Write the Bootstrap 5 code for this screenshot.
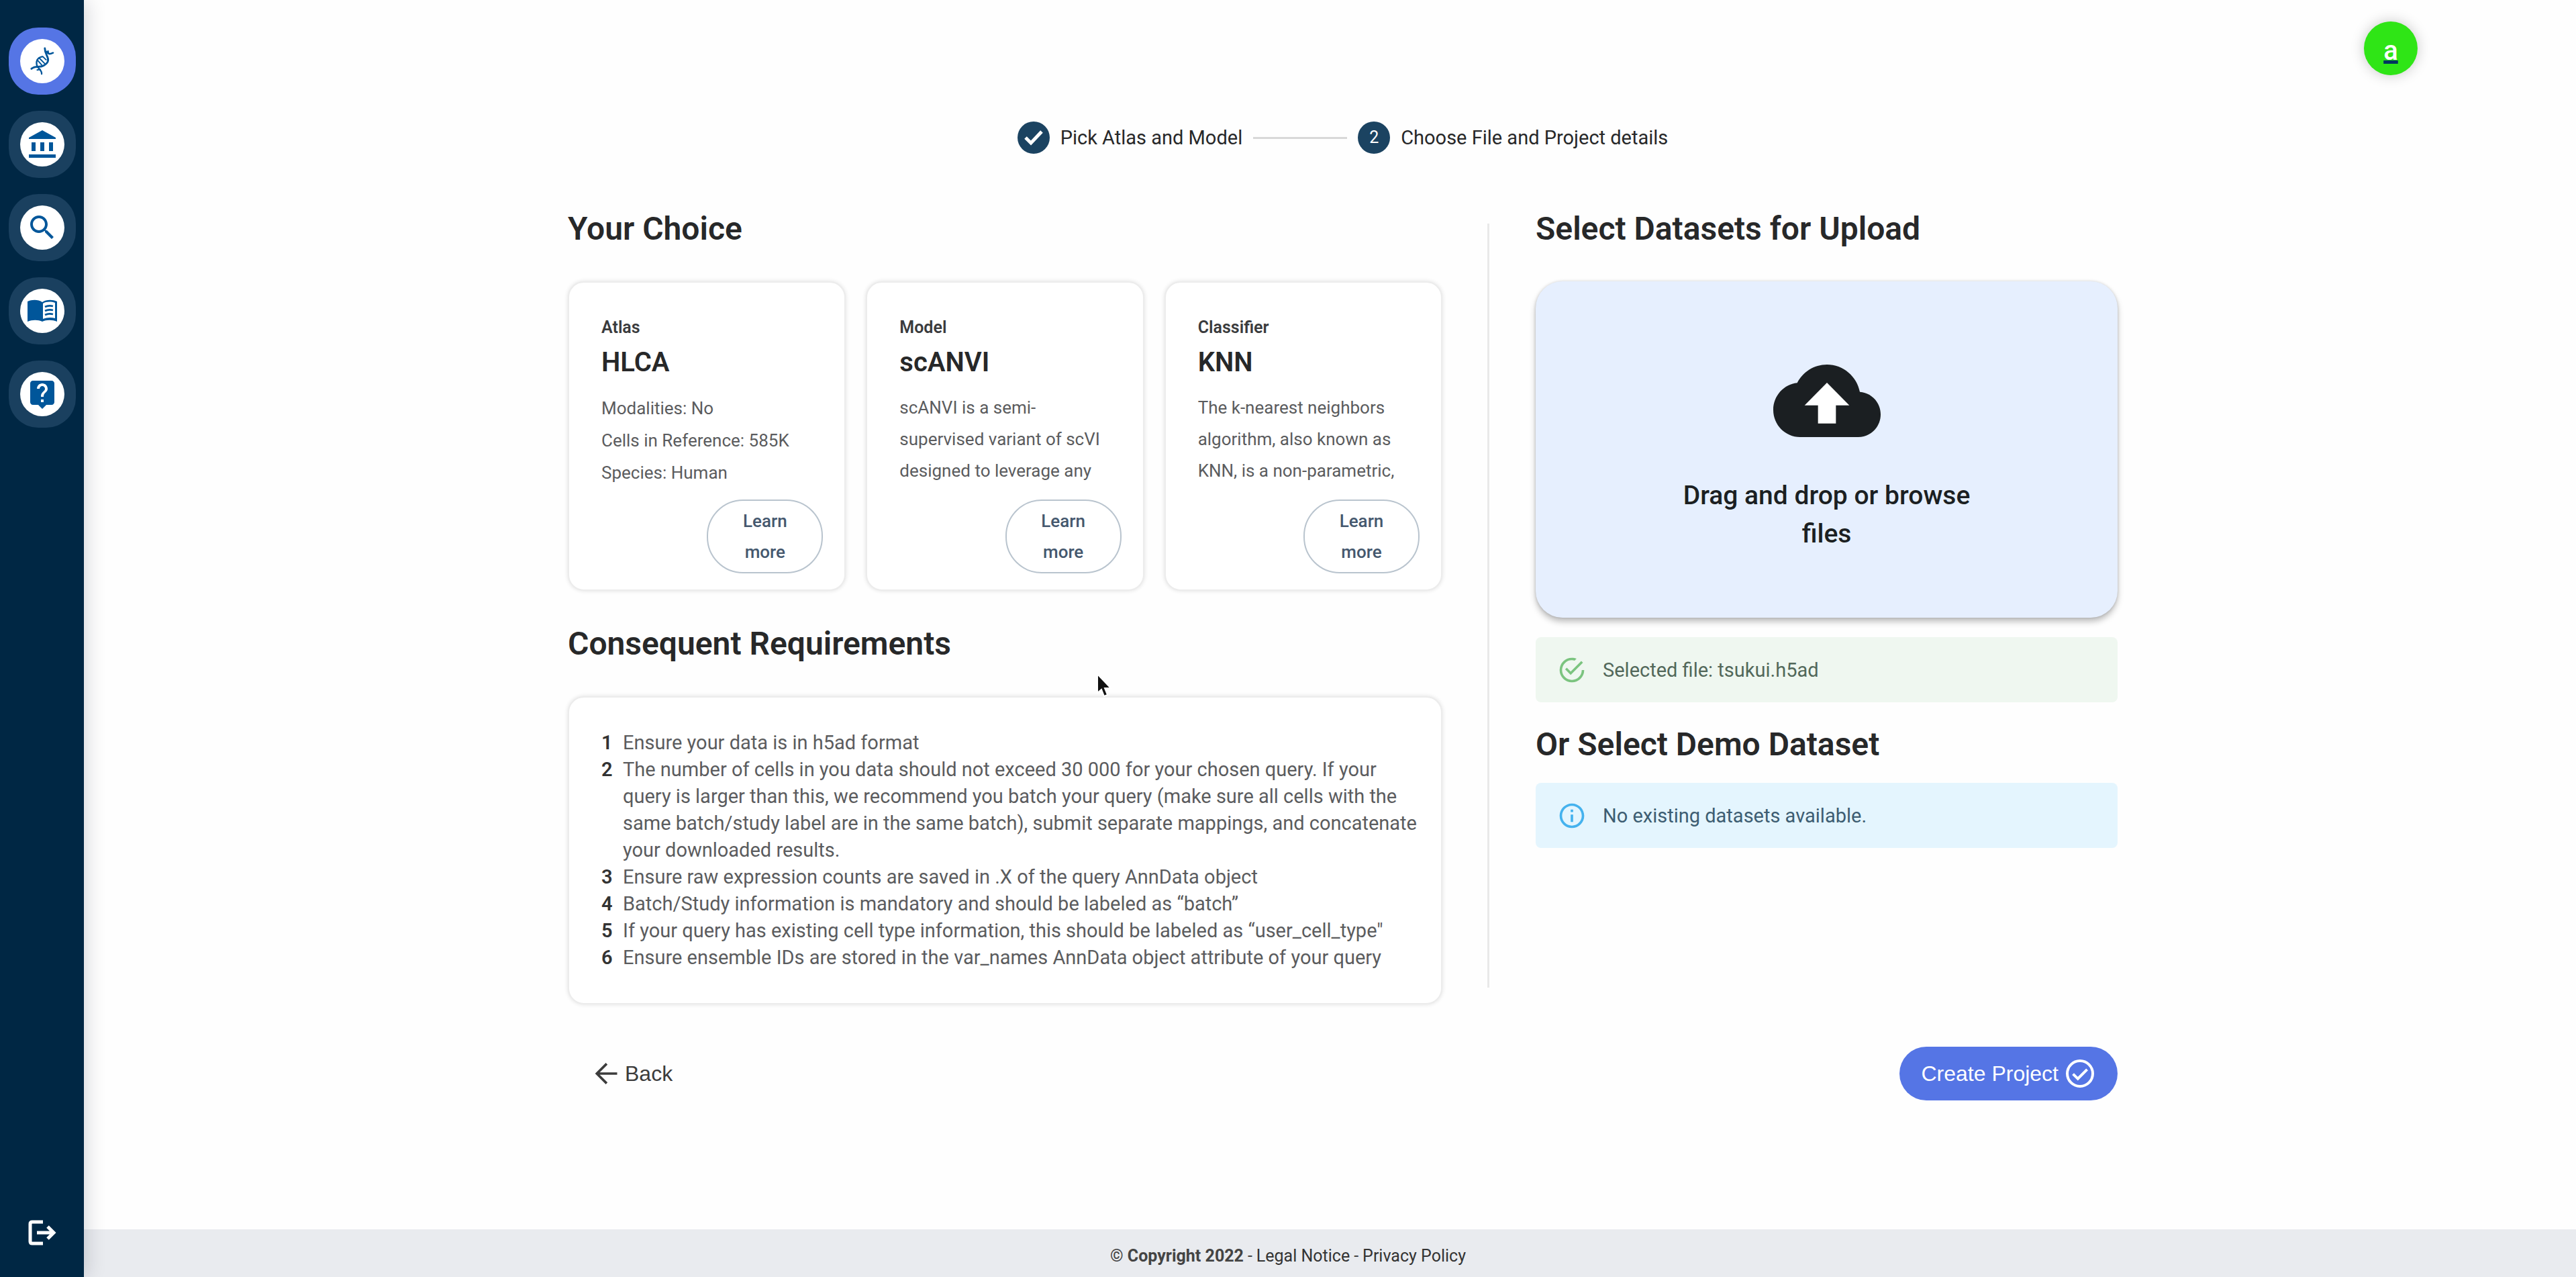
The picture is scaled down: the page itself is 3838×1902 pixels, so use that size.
<!DOCTYPE html>
<html lang="en">
<head>
<meta charset="utf-8">
<meta name="viewport" content="width=device-width, initial-scale=1">
<title>Create Project</title>
<link rel="stylesheet" href="https://cdn.jsdelivr.net/npm/bootstrap@5.3.0/dist/css/bootstrap.min.css">
<style>
  :root { --navy: #002744; --steel: #1b4361; --accent: #5575e5; --ink: #272829; --soft: #5b5c5e; }
  body { font-family: Roboto, "Liberation Sans", sans-serif; color: var(--ink); background: #fefefe; font-size: 26px; line-height: 40px; }
  svg { display: block; flex: none; }

  .side-rail { width: 125px; background: var(--navy); padding: 41px 12px 41px; box-shadow: 4px 0 28px rgba(0, 20, 40, .16); z-index: 10; }
  .rail-list { gap: 24px; }
  .rail-link { width: 100px; height: 100px; border-radius: 44px; background: #1a405f; }
  .rail-link.active { background: var(--accent); }
  .rail-disc { width: 66px; height: 66px; background: #fff; color: #00569a; }
  .rail-exit { width: 50px; height: 50px; color: #fff; }

  .page-body { padding-left: 163px; }
  .top-bar { padding: 32px 236px 0 0; }
  .avatar-link { width: 80px; height: 80px; padding-top: 8px; background: #2fe516; color: #fff; font-size: 40px; line-height: 40px; font-weight: 500; box-shadow: 0 0 20px rgba(0, 0, 0, .22); text-decoration-color: #003560; text-decoration-thickness: 5px; text-underline-offset: 1px; text-decoration-skip-ink: none; }
  .avatar-link:hover { color: #fff; }

  .stepper { gap: 16px; margin-top: 69px; font-size: 29px; line-height: 48px; }
  .step-item { gap: 16px; }
  .step-dot { width: 48px; height: 48px; background: var(--steel); color: #fff; font-size: 25px; }
  .step-line { width: 140px; height: 3px; background: #d8d8d8; }

  .content-wrap { max-width: 2309px; margin-top: 84px; }
  .col-left { flex: 1303 1 0; min-width: 0; }
  .col-right { flex: 867 1 0; min-width: 0; }
  .col-rule { width: 3px; background: #e9e9e9; margin: 20px 69px 25px 67px; }
  .sec-title { font-size: 48px; line-height: 56px; font-weight: 600; margin: 0 0 50px; }

  .panel { background: #fff; border-radius: 24px; border: 2px solid #ececec; box-shadow: 0 0 6px rgba(0, 0, 0, .12); }
  .choice-row { gap: 30px; margin-bottom: 51px; }
  .choice { flex: 1 1 0; min-width: 0; padding: 49px 32px 24px 48px; }
  .choice-kind { font-size: 25px; line-height: 36px; font-weight: 600; margin-bottom: 8px; color: #3a3b3d; }
  .choice-name { font-size: 40px; line-height: 52px; font-weight: 600; margin: 0; }
  .choice-text { font-size: 26px; line-height: 47px; height: 144px; margin: 18px 8px 16px 0; color: var(--soft); }
  .choice-facts { line-height: 48px; }
  .btn-learn { width: 173px; padding: 7px 30px; border: 2px solid #b9c4ce; border-radius: 54px; font-size: 26px; line-height: 46px; font-weight: 500; color: #45586e; background: #fff; }

  .rules-panel { padding: 47px 28px 48px 48px; }
  .rules-list { counter-reset: rule; color: var(--soft); font-size: 29px; }
  .rules-list li { counter-increment: rule; display: flex; }
  .rules-list li::before { content: counter(rule); flex: 0 0 32px; font-weight: 600; color: #333; }

  .drop-zone { height: 501px; padding: 27px 0 0; border: 0; border-radius: 40px; background: #e6effe; color: #1b1f22; box-shadow: 0 6px 10px rgba(0, 0, 0, .25), 0 0 4px rgba(0, 0, 0, .15); font-size: 39px; line-height: 57px; font-weight: 500; margin-bottom: 29px; }
  .drop-label { max-width: 480px; margin-top: 59px; }
  .note { height: 97px; border: 0; border-radius: 8px; padding: 0 32px; gap: 24px; font-size: 29px; }
  .note-ok { background: #eff7f0; color: #52685a; }
  .note-ok svg { color: #7bc47f; }
  .note-info { background: #e4f5fe; color: #3d5d72; }
  .note-info svg { color: #45b2ee; }
  .demo-title { margin: 35px 0 29px; }

  .action-row { margin-top: 61px; font-family: Arial, "Liberation Sans", sans-serif; }
  .btn-back { font-size: 32px; line-height: 40px; gap: 6px; padding: 20px 35px; color: #3c3c3c; border: 0; }
  .btn-create { font-size: 32px; line-height: 40px; gap: 8px; padding: 16px 32px; border-radius: 40px; background: var(--accent); color: #fff; border: 0; }

  .legal { background: #e9ebef; height: 71px; font-size: 25px; color: #444; gap: 6px; padding-top: 8px; }
  .legal a { color: #333; text-decoration: none; }

  .pointer { left: 1632px; top: 1001px; z-index: 20; }
</style>
</head>
<body class="position-relative">
<div class="d-flex flex-column min-vh-100">

  <nav class="side-rail position-fixed top-0 start-0 vh-100 d-flex flex-column align-items-center justify-content-between" aria-label="Main">
    <ul class="rail-list list-unstyled d-flex flex-column m-0">
      <li><a href="#" class="rail-link active d-flex align-items-center justify-content-center" aria-label="Gene mapper">
        <span class="rail-disc rounded-circle d-flex align-items-center justify-content-center">
          <svg width="38" height="44" viewBox="0 0 40 46" fill="none" stroke="currentColor" stroke-linecap="round">
            <path d="M3 35C10 29 15 34 22 30C31 25 30 20 27 14C25 10 24 6 24 3" stroke-width="3"/>
            <path d="M19 43C20 38 14 35 12 31" stroke-width="2.500"/>
            <path d="M12 31C9 23 13 17 20 16" stroke-width="2.500"/>
            <path d="M27 8C29 13 33 12 37 10" stroke-width="2.500"/>
            <path d="M12 21L19 29M15 18L24 27M21 16L26 21M12 37L17 36M29 7L30 11" stroke-width="2"/>
          </svg>
        </span></a></li>
      <li><a href="#" class="rail-link d-flex align-items-center justify-content-center" aria-label="Atlases">
        <span class="rail-disc rounded-circle d-flex align-items-center justify-content-center">
          <svg width="42" height="42" viewBox="0 0 42 42" fill="currentColor">
            <path d="M1 13V11L21 0L41 11V13ZM5 18H11V31H5ZM18 18H24V31H18ZM31 18H37V31H31ZM1 36H41V41H1Z"/>
          </svg>
        </span></a></li>
      <li><a href="#" class="rail-link d-flex align-items-center justify-content-center" aria-label="Search">
        <span class="rail-disc rounded-circle d-flex align-items-center justify-content-center">
          <svg width="48" height="48" viewBox="0 0 24 24" fill="currentColor">
            <path d="M15.5 14h-.79l-.28-.27C15.41 12.59 16 11.11 16 9.500 16 5.910 13.090 3 9.500 3S3 5.910 3 9.500 5.910 16 9.500 16c1.610 0 3.090-.59 4.230-1.570l.27.28v.79l5 4.990L20.490 19zm-6 0C7.010 14 5 11.990 5 9.500S7.010 5 9.500 5 14 7.010 14 9.500 11.990 14 9.500 14"/>
          </svg>
        </span></a></li>
      <li><a href="#" class="rail-link d-flex align-items-center justify-content-center" aria-label="Documentation">
        <span class="rail-disc rounded-circle d-flex align-items-center justify-content-center">
          <svg width="46" height="36" viewBox="0 0 46 36">
            <path fill="currentColor" d="M1 4C8 1 17 1 23 5C29 1 38 1 45 4V34C38 31 29 31 23 34C17 31 8 31 1 34Z"/>
            <path fill="#fff" d="M24 7C29 4 36 4 42 6V29C36 27 29 28 24 30Z"/>
            <path fill="none" stroke="currentColor" stroke-width="2.600" d="M27 12C31 10 35 10 39 11M27 18C31 16 35 16 39 17M27 24C31 22 35 22 39 23"/>
          </svg>
        </span></a></li>
      <li><a href="#" class="rail-link d-flex align-items-center justify-content-center" aria-label="Help">
        <span class="rail-disc rounded-circle d-flex align-items-center justify-content-center">
          <svg width="48" height="48" viewBox="0 0 24 24" fill="currentColor">
            <path d="M19 2H5c-1.110 0-2 .9-2 2v14c0 1.100.89 2 2 2h4l3 3 3-3h4c1.100 0 2-.9 2-2V4c0-1.100-.9-2-2-2m-6 16h-2v-2h2zm2.070-7.750l-.9.92C13.450 11.900 13 12.500 13 14h-2v-.5c0-1.100.45-2.100 1.170-2.830l1.240-1.260c.37-.36.59-.86.59-1.410 0-1.100-.9-2-2-2s-2 .9-2 2H8c0-2.210 1.790-4 4-4s4 1.790 4 4c0 .88-.36 1.680-.93 2.250"/>
          </svg>
        </span></a></li>
    </ul>
    <a href="#" class="rail-exit d-flex align-items-center justify-content-center" aria-label="Log out">
      <svg width="42" height="38" viewBox="0 0 42 38" fill="none" stroke="currentColor" stroke-width="5">
        <path d="M22 3H6Q3 3 3 6V32Q3 35 6 35H22M13 19H38M29 10L38 19L29 28"/>
      </svg>
    </a>
  </nav>

  <div class="page-body flex-grow-1">
    <header class="top-bar d-flex justify-content-end">
      <a href="#" class="avatar-link rounded-circle d-flex align-items-center justify-content-center">a</a>
    </header>

    <div class="stepper d-flex align-items-center justify-content-center">
      <div class="step-item d-flex align-items-center">
        <span class="step-dot rounded-circle d-flex align-items-center justify-content-center">
          <svg width="28" height="24" viewBox="0 0 28 24" fill="none" stroke="currentColor" stroke-width="5"><path d="M2 12L10 20L26 3"/></svg>
        </span>
        <span>Pick Atlas and Model</span>
      </div>
      <span class="step-line"></span>
      <div class="step-item d-flex align-items-center">
        <span class="step-dot rounded-circle d-flex align-items-center justify-content-center">2</span>
        <span>Choose File and Project details</span>
      </div>
    </div>

    <main class="content-wrap mx-auto">
      <div class="d-flex">
        <section class="col-left">
          <h2 class="sec-title">Your Choice</h2>
          <div class="choice-row d-flex">
            <article class="panel choice d-flex flex-column">
              <h3 class="choice-kind">Atlas</h3>
              <p class="choice-name">HLCA</p>
              <ul class="choice-text choice-facts list-unstyled">
                <li>Modalities: No</li>
                <li>Cells in Reference: 585K</li>
                <li>Species: Human</li>
              </ul>
              <button type="button" class="btn btn-learn align-self-end">Learn more</button>
            </article>
            <article class="panel choice d-flex flex-column">
              <h3 class="choice-kind">Model</h3>
              <p class="choice-name">scANVI</p>
              <p class="choice-text">scANVI is a semi-supervised variant of scVI designed to leverage any</p>
              <button type="button" class="btn btn-learn align-self-end">Learn more</button>
            </article>
            <article class="panel choice d-flex flex-column">
              <h3 class="choice-kind">Classifier</h3>
              <p class="choice-name">KNN</p>
              <p class="choice-text">The k-nearest neighbors algorithm, also known as KNN, is a non-parametric,</p>
              <button type="button" class="btn btn-learn align-self-end">Learn more</button>
            </article>
          </div>

          <h2 class="sec-title">Consequent Requirements</h2>
          <div class="panel rules-panel">
            <ol class="rules-list list-unstyled m-0">
              <li>Ensure your data is in h5ad format</li>
              <li>The number of cells in you data should not exceed 30 000 for your chosen query. If your query is larger than this, we recommend you batch your query (make sure all cells with the same batch/study label are in the same batch), submit separate mappings, and concatenate your downloaded results.</li>
              <li>Ensure raw expression counts are saved in .X of the query AnnData object</li>
              <li>Batch/Study information is mandatory and should be labeled as “batch”</li>
              <li>If your query has existing cell type information, this should be labeled as “user_cell_type"</li>
              <li>Ensure ensemble IDs are stored in the var_names AnnData object attribute of your query</li>
            </ol>
          </div>
        </section>

        <div class="col-rule"></div>

        <section class="col-right">
          <h2 class="sec-title">Select Datasets for Upload</h2>
          <button type="button" class="drop-zone w-100 d-flex flex-column align-items-center justify-content-center">
            <svg width="160" height="108" viewBox="0 4 24 16" preserveAspectRatio="none">
              <path d="M6 7H18V18H6Z" fill="#fff"/>
              <path fill="currentColor" d="M19.350 10.040C18.670 6.590 15.640 4 12 4 9.110 4 6.600 5.640 5.350 8.040 2.340 8.360 0 10.910 0 14c0 3.310 2.690 6 6 6h13c2.760 0 5-2.240 5-5 0-2.640-2.050-4.780-4.650-4.960M14 13v4h-4v-4H7l5-5 5 5z"/>
            </svg>
            <span class="drop-label">Drag and drop or browse files</span>
          </button>
          <div class="note note-ok d-flex align-items-center" role="status">
            <svg width="44" height="44" viewBox="0 0 24 24" fill="currentColor">
              <path d="M20 12A8 8 0 0 1 12 20A8 8 0 0 1 4 12A8 8 0 0 1 12 4C12.760 4 13.500 4.110 14.200 4.310L15.770 2.740C14.610 2.260 13.340 2 12 2A10 10 0 0 0 2 12A10 10 0 0 0 12 22A10 10 0 0 0 22 12M7.910 10.080L6.500 11.500L11 16L21 6L19.590 4.580L11 13.170L7.910 10.080Z"/>
            </svg>
            <span>Selected file: tsukui.h5ad</span>
          </div>
          <h2 class="sec-title demo-title">Or Select Demo Dataset</h2>
          <div class="note note-info d-flex align-items-center" role="status">
            <svg width="44" height="44" viewBox="0 0 24 24" fill="currentColor">
              <path d="M11 7h2v2h-2zm0 4h2v6h-2zm1-9C6.480 2 2 6.480 2 12s4.480 10 10 10 10-4.480 10-10S17.520 2 12 2m0 18c-4.410 0-8-3.590-8-8s3.590-8 8-8 8 3.590 8 8-3.590 8-8 8"/>
            </svg>
            <span>No existing datasets available.</span>
          </div>
        </section>
      </div>

      <div class="action-row d-flex justify-content-between align-items-center">
        <button type="button" class="btn btn-back d-flex align-items-center">
          <svg width="44" height="44" viewBox="0 0 24 24" fill="none" stroke="currentColor" stroke-width="2"><path d="M21 12H5M12.500 4L4.500 12L12.500 20"/></svg>
          <span>Back</span>
        </button>
        <button type="button" class="btn btn-create d-flex align-items-center">
          <span>Create Project</span>
          <svg width="48" height="48" viewBox="0 0 24 24" fill="none" stroke="currentColor" stroke-width="2"><circle cx="12" cy="12" r="9.500"/><path d="M6.800 12.300L10.400 15.800L17.300 8.900"/></svg>
        </button>
      </div>
    </main>
  </div>

  <footer class="legal d-flex align-items-center justify-content-center">
    <strong>© Copyright 2022</strong>
    <span>-</span>
    <a href="#">Legal Notice</a>
    <span>-</span>
    <a href="#">Privacy Policy</a>
  </footer>
</div>

<svg class="pointer position-absolute" width="28" height="40" viewBox="0 0 28 40">
  <path d="M3 3V31L9 26L13 36L18 34L14 24H23Z" fill="#111" stroke="#fff" stroke-width="2"/>
</svg>
<script src="https://cdn.jsdelivr.net/npm/bootstrap@5.3.0/dist/js/bootstrap.bundle.min.js"></script>
</body>
</html>
